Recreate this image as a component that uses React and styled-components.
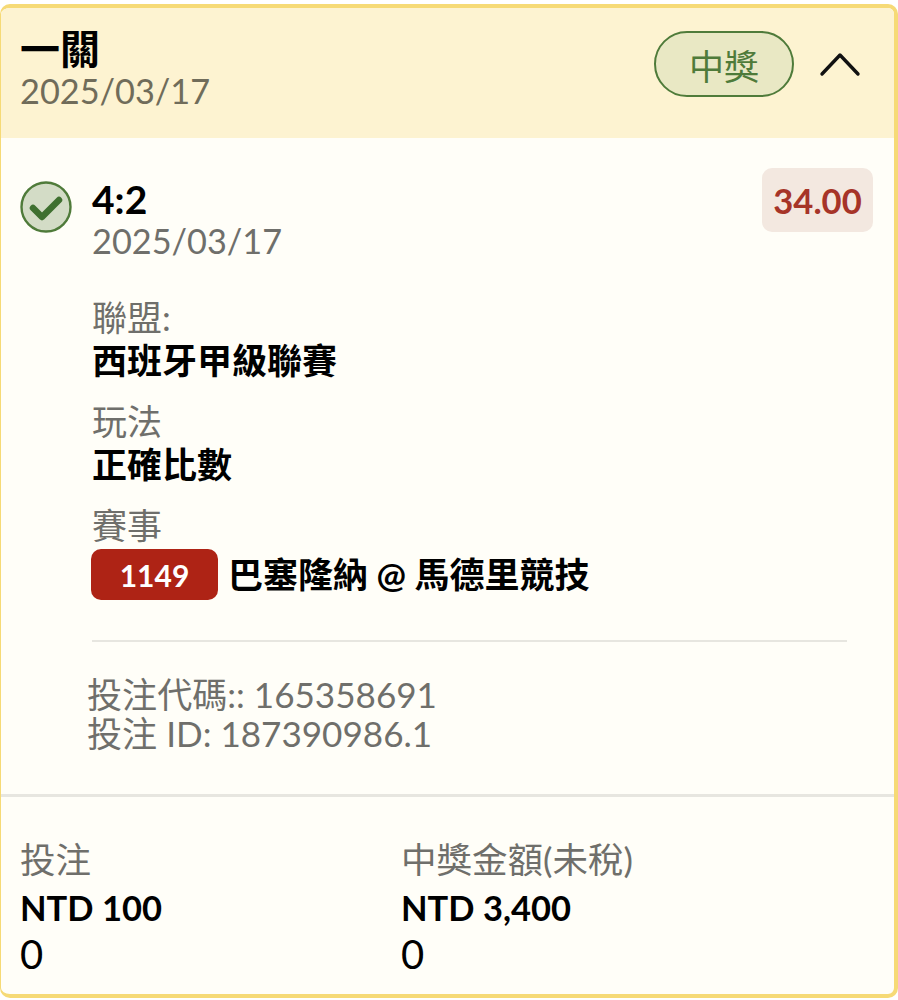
import React from 'react';
import styled, { createGlobalStyle } from 'styled-components';

const GlobalStyle = createGlobalStyle`
    html, body {
        margin: 0;
        padding: 0;
        background: #ffffff;
    }
    body {
        font-family: Lato, "Noto Sans CJK TC", sans-serif;
        color: #000;
    }
`;

const Card = styled.div`
    box-sizing: border-box;
    width: 898px;
    height: 994px;
    margin-top: 4px;
    border: 4px solid #f6da76;
    border-left-width: 1px;
    border-radius: 10px;
    background: #fffef8;
    overflow: hidden;
`;

const Header = styled.div`
    box-sizing: border-box;
    height: 130px;
    padding: 21px 33px 0 19px;
    background: #fdf3d1;
    display: flex;
    justify-content: space-between;
    align-items: flex-start;
`;

const Title = styled.div`
    font-size: 40px;
    line-height: 41px;
    font-weight: 700;
`;

const HeaderDate = styled.div`
    font-size: 34.3px;
    line-height: 41px;
    color: #706c5a;
`;

const HeaderRight = styled.div`
    display: flex;
    align-items: center;
    gap: 25px;
    margin-top: 2px;
`;

const StatusPill = styled.div`
    box-sizing: border-box;
    width: 140px;
    height: 66px;
    border: 2.5px solid #4f7b3a;
    border-radius: 33px;
    background: #e9e8c4;
    color: #4f7b3a;
    font-size: 35px;
    display: flex;
    align-items: center;
    justify-content: center;
`;

const Body = styled.div`
    padding: 30px 21px 0 19px;
`;

const BetRow = styled.div`
    display: flex;
    align-items: flex-start;
`;

const CheckIcon = styled.svg`
    flex: none;
    width: 52px;
    height: 52px;
    margin-top: 13px;
    margin-right: 20px;
`;

const BetInfo = styled.div`
    flex: 1;
`;

const Pick = styled.div`
    font-size: 39px;
    line-height: 44px;
    font-weight: 700;
    margin-top: 9px;
`;

const MutedLine = styled.div`
    font-size: 34.3px;
    line-height: 40px;
    color: #6f6f6b;
`;

const OddsTag = styled.div`
    box-sizing: border-box;
    width: 111px;
    height: 64px;
    border-radius: 10px;
    background: #f3e8e0;
    color: #a63428;
    font-size: 34.6px;
    font-weight: 700;
    display: flex;
    align-items: center;
    justify-content: center;
`;

const Field = styled.div`
    margin-top: ${(p) => p.$top}px;
`;

const FieldLabel = styled.div`
    font-size: 35px;
    line-height: 40px;
    color: #6f6f6b;
`;

const FieldValue = styled.div`
    font-size: 35px;
    line-height: 46px;
    font-weight: 700;
    display: flex;
    align-items: center;
    gap: 10px;
`;

const MatchValue = styled(FieldValue)`
    margin-top: 2px;
`;

const MatchCode = styled.span`
    box-sizing: border-box;
    width: 127px;
    height: 51px;
    margin: 2px 0 0 -1px;
    border-radius: 10px;
    background: #ae2315;
    color: #fff;
    font-size: 30px;
    font-weight: 700;
    display: flex;
    align-items: center;
    justify-content: center;
`;

const Rule = styled.div`
    height: 2px;
    background: #e7e6e0;
    margin: 40px 26px 0 72px;
`;

const Codes = styled.div`
    margin: 33px 0 0 67px;
    font-size: 35.1px;
    line-height: 39px;
    color: #6f6f6b;
`;

const Footer = styled.div`
    margin-top: 41px;
    border-top: 3px solid #e7e6e0;
    padding: 39px 19px 0;
    display: grid;
    grid-template-columns: 381px 1fr;
`;

const AmountLabel = styled.div`
    font-size: 35.5px;
    line-height: 48px;
    color: #6f6f6b;
`;

const AmountValue = styled.div`
    font-size: 34.5px;
    line-height: 48px;
    font-weight: 700;
`;

const AmountExtra = styled.div`
    font-size: 40px;
    line-height: 44px;
`;

const Check = () => (
    <CheckIcon viewBox="0 0 52 52">
        <circle cx="26" cy="26" r="24.5" fill="#d3dcc6" stroke="#4f7b3a" strokeWidth="2.4" />
        <path d="M13 27l9 9 17-17" fill="none" stroke="#3f7030" strokeWidth="6.5" strokeLinecap="round" strokeLinejoin="round" />
    </CheckIcon>
);

const Chevron = () => (
    <svg width="42" height="26" viewBox="0 0 42 26" fill="none">
        <path d="M3 23L21 4l18 19" stroke="#111" strokeWidth="3.4" strokeLinecap="round" strokeLinejoin="round" />
    </svg>
);

const App = () => {
    return (
        <>
            <GlobalStyle />
            <Card>
                <Header>
                    <div>
                        <Title>一關</Title>
                        <HeaderDate>2025/03/17</HeaderDate>
                    </div>
                    <HeaderRight>
                        <StatusPill>中獎</StatusPill>
                        <Chevron />
                    </HeaderRight>
                </Header>
                <Body>
                    <BetRow>
                        <Check />
                        <BetInfo>
                            <Pick>4:2</Pick>
                            <MutedLine>2025/03/17</MutedLine>
                            <Field $top={36}>
                                <FieldLabel>聯盟:</FieldLabel>
                                <FieldValue>西班牙甲級聯賽</FieldValue>
                            </Field>
                            <Field $top={18}>
                                <FieldLabel>玩法</FieldLabel>
                                <FieldValue>正確比數</FieldValue>
                            </Field>
                            <Field $top={18}>
                                <FieldLabel>賽事</FieldLabel>
                                <MatchValue>
                                    <MatchCode>1149</MatchCode>
                                    巴塞隆納 @ 馬德里競技
                                </MatchValue>
                            </Field>
                        </BetInfo>
                        <OddsTag>34.00</OddsTag>
                    </BetRow>
                    <Rule />
                    <Codes>
                        <div>投注代碼:: 165358691</div>
                        <div>投注 ID: 187390986.1</div>
                    </Codes>
                </Body>
                <Footer>
                    <div>
                        <AmountLabel>投注</AmountLabel>
                        <AmountValue>NTD 100</AmountValue>
                        <AmountExtra>0</AmountExtra>
                    </div>
                    <div>
                        <AmountLabel>中獎金額(未稅)</AmountLabel>
                        <AmountValue>NTD 3,400</AmountValue>
                        <AmountExtra>0</AmountExtra>
                    </div>
                </Footer>
            </Card>
        </>
    );
};

export default App;
